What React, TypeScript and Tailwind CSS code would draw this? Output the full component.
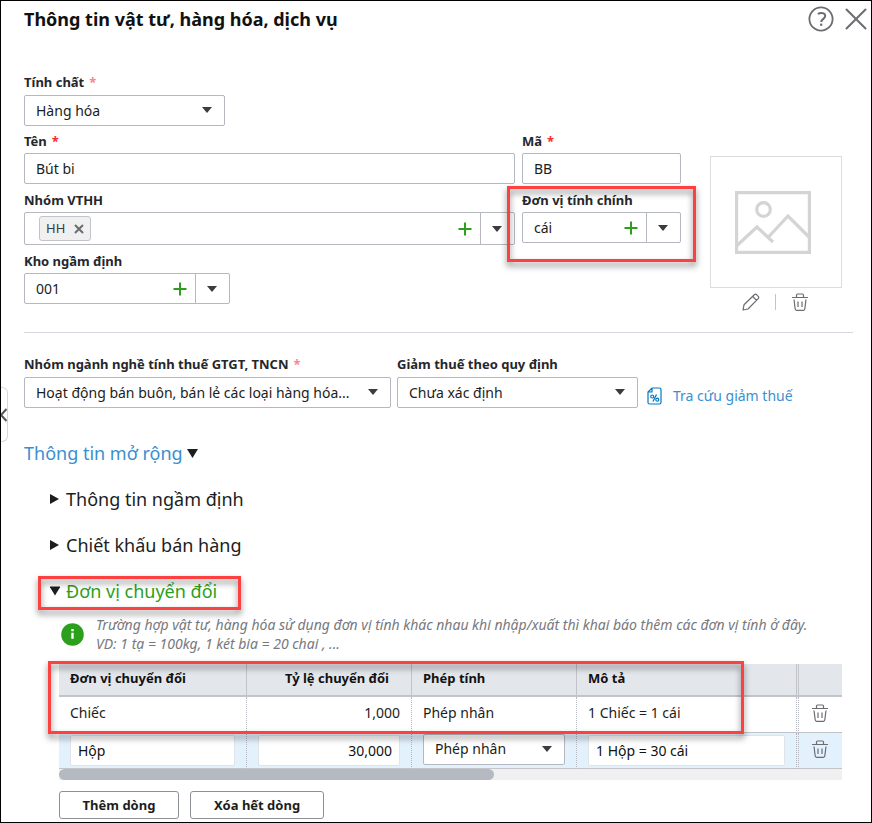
import { useState } from "react";
import type { ReactNode } from "react";

const FIELD = "rounded-xs border border-[#b5b8c1] bg-white";

const TAX_GROUPS = ["Hoạt động bán buôn, bán lẻ các loại hàng hóa..."];

function Caret({ className = "" }: { className?: string }) {
  return (
    <svg width="10" height="6" viewBox="0 0 10 6" className={className} aria-hidden="true">
      <path d="M0 0h10L5 6z" fill="#3a3c41" />
    </svg>
  );
}

function Plus() {
  return (
    <svg width="14" height="14" viewBox="0 0 14 14" aria-hidden="true">
      <path d="M7 0.5v13M0.5 7h13" stroke="#2ca01c" strokeWidth="2" />
    </svg>
  );
}

function Trash() {
  return (
    <svg width="18" height="18" viewBox="0 0 18 18" fill="none" stroke="#6b6c72" strokeWidth="1.2" aria-hidden="true">
      <path d="M1 4.500h16M5.500 4.500v-2.300q0-1.200 1-1.200h5q1 0 1 1.200v2.300" />
      <path d="M3 6.500l1.200 9.500q.2 1.300 1.400 1.300h6.800q1.200 0 1.400-1.300L15 6.500" />
      <path d="M7 8.500v5.500M11 8.500v5.500" />
    </svg>
  );
}

function Label({ id, required, children }: { id: string; required?: "soft" | "strong"; children: ReactNode }) {
  return (
    <label htmlFor={id} className="block text-[13px] leading-[18px] font-bold text-[#26272b]">
      {children}
      {required && <span className={required === "soft" ? "ml-[5px] text-[#ff8585]" : "ml-[5px] text-[#ff2a2a]"}>*</span>}
    </label>
  );
}

function Select({ id, options, label }: { id: string; options: string[]; label?: string }) {
  return (
    <div className="relative">
      <select
        id={id}
        aria-label={label}
        className={`${FIELD} block h-[31px] w-full appearance-none truncate pr-8 pl-[11px] text-sm text-[#1c1d20] outline-none`}
      >
        {options.map((o) => (
          <option key={o}>{o}</option>
        ))}
      </select>
      <Caret className="pointer-events-none absolute top-[12px] right-[13px]" />
    </div>
  );
}

function ComboButtons({ name }: { name: string }) {
  return (
    <>
      <button type="button" aria-label={`Thêm ${name}`} className="flex w-[30px] items-center justify-center">
        <Plus />
      </button>
      <button
        type="button"
        aria-label={`Chọn ${name}`}
        className="flex w-[34px] items-center justify-center border-l border-[#b5b8c1] pr-[2px]"
      >
        <Caret />
      </button>
    </>
  );
}

function Combo({ id, name, value }: { id: string; name: string; value: string }) {
  return (
    <div className={`${FIELD} flex h-[31px]`}>
      <input
        id={id}
        defaultValue={value}
        className="w-0 min-w-0 flex-1 bg-transparent pl-[11px] text-sm text-[#1c1d20] outline-none"
      />
      <ComboButtons name={name} />
    </div>
  );
}

function Highlight({ className }: { className: string }) {
  return (
    <div
      className={`pointer-events-none absolute border-3 border-[#fd4040] drop-shadow-[0_4px_3px_rgba(0,0,0,0.5)] ${className}`}
    />
  );
}

function Section({ title, open, onToggle }: { title: string; open: boolean; onToggle: () => void }) {
  return (
    <button
      type="button"
      aria-expanded={open}
      onClick={onToggle}
      className={`flex h-[30px] items-center gap-1.5 text-lg ${open ? "text-[#2ca01c]" : "text-[#1c1d20]"}`}
    >
      <svg width="10" height="10" viewBox="0 0 10 10" fill="#1c1d20" aria-hidden="true">
        {open ? <path d="M-.5 .5h11L5 9.500z" /> : <path d="M0 0l9 5L0 10z" />}
      </svg>
      {title}
    </button>
  );
}

export default function App() {
  const [open, setOpen] = useState<Record<string, boolean>>({ convert: true });
  const toggle = (k: string) => setOpen((o) => ({ ...o, [k]: !o[k] }));

  const th = "h-[33px] border-b-2 border-[#c3c4c9] px-[11px] pb-[2px] text-[13px] font-bold text-[#111]";
  const td = "h-9 border-b border-b-[#c3c4c9]";
  const textCell = "px-[11px] pb-[3px]";
  const dotted = "border-r border-r-[#b5b8c1] [border-right-style:dotted]";
  const cellInput = "block h-[31px] w-full rounded-xs border border-[#e0e3e8] bg-white px-[7px] text-sm text-[#111] outline-none";

  return (
    <main className="relative min-h-screen border border-black bg-white pr-[18px] pl-[23px] font-['Noto_Sans','Open_Sans',sans-serif] text-sm text-[#1c1d20]">
      <button
        type="button"
        aria-label="Thu gọn"
        className="absolute top-[386px] left-0 flex h-[55px] w-[7px] items-center rounded-r-md border border-l-0 border-[#d4d7dc] bg-white"
      >
        <svg width="6" height="14" viewBox="0 0 6 14" fill="none" aria-hidden="true">
          <path d="M5.500 1L0 7l5.500 6" stroke="#55565b" strokeWidth="2" />
        </svg>
      </button>

      <header className="flex h-9 items-center justify-between">
        <h1 className="text-lg font-bold text-[#111]">Thông tin vật tư, hàng hóa, dịch vụ</h1>
        <div className="-mr-[14px] flex items-center gap-[11px]">
          <button type="button" aria-label="Trợ giúp">
            <svg width="26" height="26" viewBox="0 0 26 26" fill="none" stroke="#6b6c72" aria-hidden="true">
              <circle cx="13" cy="13" r="11.600" strokeWidth="1.800" />
              <path d="M9.800 8q3-1.800 5.800-.6c2.200 1.100 2 3.600.2 5-1.700 1.300-2.600 1.900-2.600 3.600" strokeWidth="2" />
              <path d="M13.200 17.600v2.200" strokeWidth="2.200" />
            </svg>
          </button>
          <button type="button" aria-label="Đóng">
            <svg width="22" height="22" viewBox="0 0 22 22" fill="none" aria-hidden="true">
              <path d="M1.500 1.500l19 19M20.500 1.500l-19 19" stroke="#6b6c72" strokeWidth="2" strokeLinecap="round" />
            </svg>
          </button>
        </div>
      </header>

      <div className="mt-9 flex w-[201px] flex-col gap-1">
        <Label id="kind" required="soft">
          Tính chất
        </Label>
        <Select id="kind" options={["Hàng hóa"]} />
      </div>

      <div className="mt-[6px] mr-[11px] flex gap-[29px]">
        <div className="grid min-w-0 flex-1 grid-cols-[minmax(0,1fr)_159px] content-start gap-x-[7px] gap-y-[7px]">
          <div className="flex flex-col gap-[3px]">
            <Label id="name" required="strong">
              Tên
            </Label>
            <input id="name" defaultValue="Bút bi" className={`${FIELD} h-[31px] w-full px-[11px] outline-none`} />
          </div>
          <div className="flex flex-col gap-[3px]">
            <Label id="code" required="strong">
              Mã
            </Label>
            <input id="code" defaultValue="BB" className={`${FIELD} h-[31px] w-full px-[11px] outline-none`} />
          </div>
          <div className="flex flex-col gap-[3px]">
            <Label id="group">Nhóm VTHH</Label>
            <div className={`${FIELD} flex h-[33px]`}>
              <span className="my-[3px] ml-[14px] flex items-center gap-[9px] rounded-[3px] border border-[#c3c4c9] bg-[#f0f0f0] px-[6px] text-[13px] text-[#393a3d]">
                HH
                <button type="button" aria-label="Bỏ HH">
                  <svg width="10" height="10" viewBox="0 0 10 10" aria-hidden="true">
                    <path d="M1 1l8 8M9 1L1 9" stroke="#6b6c72" strokeWidth="2" />
                  </svg>
                </button>
              </span>
              <input id="group" className="w-0 min-w-0 flex-1 bg-transparent px-2 outline-none" />
              <ComboButtons name="nhóm" />
            </div>
          </div>
          <div className="relative flex flex-col gap-[3px]">
            <Label id="unit">Đơn vị tính chính</Label>
            <Combo id="unit" name="đơn vị" value="cái" />
            <Highlight className="-inset-x-[15px] -top-[5px] -bottom-[17px]" />
          </div>
          <div className="flex w-[206px] flex-col gap-[3px]">
            <Label id="stock">Kho ngầm định</Label>
            <Combo id="stock" name="kho" value="001" />
          </div>
        </div>

        <div className="mt-6 w-[132px]">
          <div className="flex h-[132px] items-center justify-center border border-[#dcdcdc] pr-[6px]">
            <svg width="76" height="63" viewBox="0 0 76 63" fill="none" stroke="#d4d4d4" strokeWidth="3.200" aria-hidden="true">
              <path d="M1.600 1.600h72.800v59.800H1.600z" />
              <circle cx="28.500" cy="18.500" r="6.800" />
              <path d="M2 54.500L22 36l16 15M33 46.500L53 25l21.500 21.500" />
            </svg>
          </div>
          <div className="mt-[5px] flex items-center justify-center gap-[15px] pr-[2px]">
            <button type="button" aria-label="Sửa ảnh">
              <svg width="18" height="18" viewBox="0 0 18 18" fill="none" stroke="#6b6c72" strokeWidth="1.200" strokeLinejoin="round" aria-hidden="true">
                <path d="M1 17l1-5.200L12.300 1.700q1.200-1 2.400.1l1.500 1.500q1.100 1.200 0 2.400L6 16zM10.700 3.500l3.900 3.900" />
              </svg>
            </button>
            <span className="h-4 w-px bg-[#c3c4c9]" />
            <button type="button" aria-label="Xóa ảnh">
              <Trash />
            </button>
          </div>
        </div>
      </div>

      <hr className="mt-[21px] border-[#d4d7dc]" />

      <div className="mt-[22px] grid grid-cols-[367fr_241fr_209fr] gap-x-[6px]">
        <div className="flex min-w-0 flex-col gap-1">
          <Label id="tax" required="soft">
            Nhóm ngành nghề tính thuế GTGT, TNCN
          </Label>
          <Select id="tax" options={TAX_GROUPS} />
        </div>
        <div className="flex min-w-0 flex-col gap-1">
          <Label id="cut">Giảm thuế theo quy định</Label>
          <Select id="cut" options={["Chưa xác định"]} />
        </div>
        <a href="#tra-cuu" className="mt-[31px] flex h-5 items-center gap-[11px] pl-[3px] whitespace-nowrap text-[#3a8fd0]">
          <svg width="15" height="18" viewBox="0 0 15 18" fill="none" stroke="#0077c5" strokeWidth="1.200" aria-hidden="true">
            <path d="M5 1h7.500q1.500 0 1.500 1.500v13q0 1.500-1.500 1.500h-10Q1 17 1 15.500V5zM5 1v4H1" />
            <path d="M9.500 7.500l-3.500 7" strokeWidth="1.300" />
            <circle cx="5.200" cy="9.500" r="1.500" />
            <circle cx="10.300" cy="12.700" r="1.500" />
          </svg>
          Tra cứu giảm thuế
        </a>
      </div>

      <button type="button" className="mt-[30px] flex h-[30px] items-center gap-1 text-lg text-[#3a8fd0]">
        Thông tin mở rộng
        <svg width="11" height="9" viewBox="0 0 11 9" aria-hidden="true">
          <path d="M0 0h11L5.500 9z" fill="#1c1d20" />
        </svg>
      </button>

      <div className="mt-4 mr-[11px] ml-[26px]">
        <div className="flex flex-col items-start gap-4">
          <Section title="Thông tin ngầm định" open={!!open.defaults} onToggle={() => toggle("defaults")} />
          <Section title="Chiết khấu bán hàng" open={!!open.discount} onToggle={() => toggle("discount")} />
          <div className="relative">
            <Section title="Đơn vị chuyển đổi" open={!!open.convert} onToggle={() => toggle("convert")} />
            <Highlight className="top-0 -right-[24px] -bottom-1 -left-[12px]" />
          </div>
        </div>

        {open.convert && (
          <div className="ml-[9px] pb-[3px]">
            <div className="mt-[9px] flex items-center gap-3 pl-[2px]">
              <svg width="23" height="23" viewBox="0 0 23 23" className="shrink-0" aria-hidden="true">
                <circle cx="11.500" cy="11.500" r="11.300" fill="#2ca01c" />
                <path d="M11.500 9.800v6M11.500 6v2.200" stroke="#fff" strokeWidth="2.400" />
              </svg>
              <p className="text-sm leading-[19px] text-[#77787d] italic">
                Trường hợp vật tư, hàng hóa sử dụng đơn vị tính khác nhau khi nhập/xuất thì khai báo thêm các đơn vị
                tính ở đây.
                <br />
                VD: 1 tạ = 100kg, 1 két bia = 20 chai , ...
              </p>
            </div>

            <div className="relative mt-[11px]">
              <table className="w-full table-fixed border-separate border-spacing-0">
                <colgroup>
                  <col className="w-[188px]" />
                  <col className="w-[165px]" />
                  <col className="w-[165px]" />
                  <col />
                  <col className="w-[2px]" />
                  <col className="w-[43px]" />
                </colgroup>
                <thead className="bg-[#e3e6eb]">
                  <tr>
                    <th className={`${th} border-r text-left`}>Đơn vị chuyển đổi</th>
                    <th className={`${th} border-r pr-[22px] text-right`}>Tỷ lệ chuyển đổi</th>
                    <th className={`${th} border-r text-left`}>Phép tính</th>
                    <th className={`${th} border-r text-left`}>Mô tả</th>
                    <td className="border-r border-b-2 border-[#c3c4c9]" />
                    <td className="border-b-2 border-[#c3c4c9]" />
                  </tr>
                </thead>
                <tbody>
                  <tr>
                    <td className={`${td} ${dotted} ${textCell}`}>Chiếc</td>
                    <td className={`${td} ${dotted} ${textCell} text-right`}>1,000</td>
                    <td className={`${td} ${dotted} ${textCell}`}>Phép nhân</td>
                    <td className={`${td} ${dotted} ${textCell}`}>1 Chiếc = 1 cái</td>
                    <td className={`${td} ${dotted}`} />
                    <td className={`${td} pr-[2px] pb-[3px]`}>
                      <button type="button" aria-label="Xóa dòng Chiếc" className="mx-auto block">
                        <Trash />
                      </button>
                    </td>
                  </tr>
                  <tr className="bg-[#e3f1fd]">
                    <td className={`${td} ${dotted} px-[11px]`}>
                      <input aria-label="Đơn vị chuyển đổi" defaultValue="Hộp" className={cellInput} />
                    </td>
                    <td className={`${td} ${dotted} px-[11px]`}>
                      <input aria-label="Tỷ lệ chuyển đổi" defaultValue="30,000" className={`${cellInput} text-right`} />
                    </td>
                    <td className={`${td} ${dotted} px-[11px] pb-[3px]`}>
                      <Select id="op" label="Phép tính" options={["Phép nhân"]} />
                    </td>
                    <td className={`${td} ${dotted} px-[11px]`}>
                      <input aria-label="Mô tả" defaultValue="1 Hộp = 30 cái" className={cellInput} />
                    </td>
                    <td className={`${td} ${dotted}`} />
                    <td className={`${td} pr-[2px] pb-[3px]`}>
                      <button type="button" aria-label="Xóa dòng Hộp" className="mx-auto block">
                        <Trash />
                      </button>
                    </td>
                  </tr>
                </tbody>
              </table>
              <div className="h-[11px] bg-[#f0f0f0]">
                <div className="h-full w-5/9 rounded-full bg-[#b5b9c2]" />
              </div>
              <Highlight className="-top-[3px] right-[98px] -left-[11px] h-[73px]" />
            </div>

            <div className="mt-[11px] flex gap-[11px]">
              <button type="button" className="h-7 w-[120px] rounded-[3px] border border-[#8d9096] text-[13px] font-bold">
                Thêm dòng
              </button>
              <button type="button" className="h-7 w-[134px] rounded-[3px] border border-[#8d9096] text-[13px] font-bold">
                Xóa hết dòng
              </button>
            </div>
          </div>
        )}
      </div>
    </main>
  );
}
